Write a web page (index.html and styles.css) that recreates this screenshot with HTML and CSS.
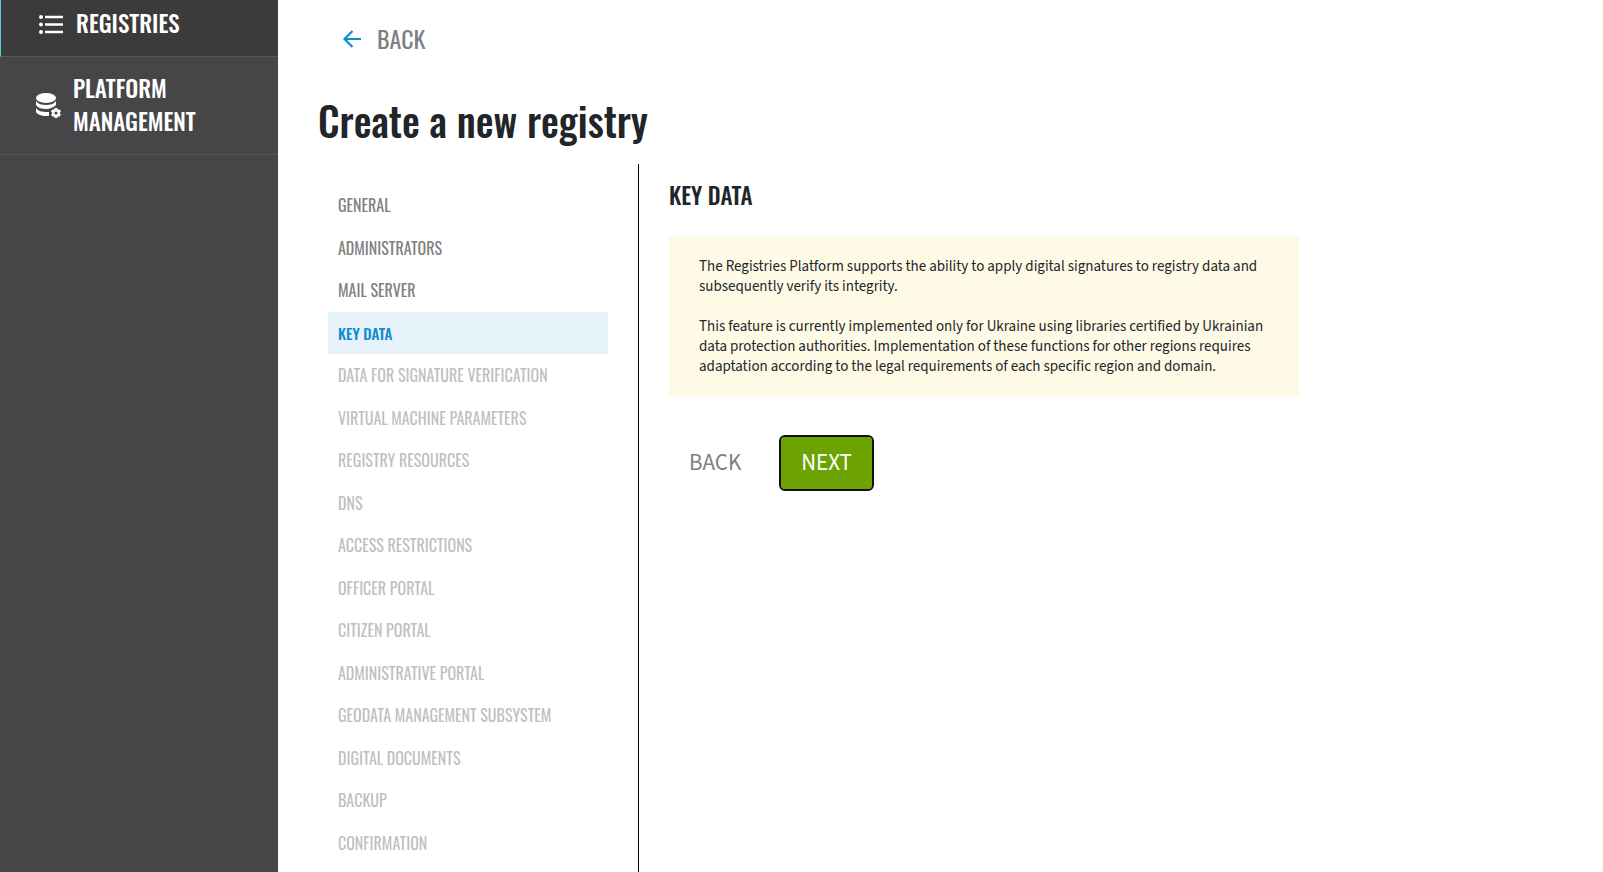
FILE: index.html
```html
<!DOCTYPE html>
<html lang="en">
<head>
<meta charset="utf-8">
<meta name="viewport" content="width=device-width, initial-scale=1">
<title>Create a new registry</title>
<link rel="stylesheet" href="styles.css">
</head>
<body>
<div class="layout">
  <nav class="sidebar" aria-label="Main">
    <a class="nav-item nav-item-active" href="#">
      <svg class="nav-icon" viewBox="0 0 26 26" aria-hidden="true">
        <g fill="#fff"><circle cx="3" cy="6" r="2"/><circle cx="3" cy="13.500" r="2"/><circle cx="3" cy="21" r="2"/></g>
        <path d="M7 6h18M7 13.500h18M7 21h18" stroke="#fff" stroke-width="2.400"/>
      </svg>
      <span class="nav-label">REGISTRIES</span>
    </a>
    <a class="nav-item nav-item-platform" href="#">
      <svg class="nav-icon" viewBox="0 0 26 26" aria-hidden="true">
        <ellipse cx="11" cy="6" rx="10" ry="5" fill="#fff"/>
        <path d="M1 9c2 3 6 4 10 4s8-1 10-4v4c-2 2-6 4-10 4S3 16 1 13z" fill="#fff"/>
        <path d="M1 16c2 3 6 4 10 4h3v4h-3c-5 0-9-2-10-4z" fill="#fff"/>
        <circle cx="21" cy="21" r="6" fill="#464648"/>
        <path d="M21 16v10M16.700 18.500l8.600 5M25.300 18.500l-8.600 5" stroke="#fff" stroke-width="2.800"/>
        <circle cx="21" cy="21" r="2.800" fill="#464648" stroke="#fff" stroke-width="2.400"/>
      </svg>
      <span class="nav-label">PLATFORM MANAGEMENT</span>
    </a>
  </nav>
  <main class="content">
    <a class="back-link" href="#">
      <svg class="back-icon" viewBox="0 0 18 18" aria-hidden="true"><path d="M18 10H1.500M9.500 2L1.500 10l8 8" fill="none" stroke="#0f8bd0" stroke-width="2.200"/></svg>
      <span>BACK</span>
    </a>
    <h1 class="page-title">Create a new registry</h1>
    <div class="wizard">
      <ol class="steps">
        <li><a class="step" href="#">GENERAL</a></li>
        <li><a class="step" href="#">ADMINISTRATORS</a></li>
        <li><a class="step" href="#">MAIL SERVER</a></li>
        <li><a class="step step-current" href="#" aria-current="step">KEY DATA</a></li>
        <li><a class="step step-disabled">DATA FOR SIGNATURE VERIFICATION</a></li>
        <li><a class="step step-disabled">VIRTUAL MACHINE PARAMETERS</a></li>
        <li><a class="step step-disabled">REGISTRY RESOURCES</a></li>
        <li><a class="step step-disabled">DNS</a></li>
        <li><a class="step step-disabled">ACCESS RESTRICTIONS</a></li>
        <li><a class="step step-disabled">OFFICER PORTAL</a></li>
        <li><a class="step step-disabled">CITIZEN PORTAL</a></li>
        <li><a class="step step-disabled">ADMINISTRATIVE PORTAL</a></li>
        <li><a class="step step-disabled">GEODATA MANAGEMENT SUBSYSTEM</a></li>
        <li><a class="step step-disabled">DIGITAL DOCUMENTS</a></li>
        <li><a class="step step-disabled">BACKUP</a></li>
        <li><a class="step step-disabled">CONFIRMATION</a></li>
      </ol>
      <section class="panel">
        <h2 class="panel-title">KEY DATA</h2>
        <div class="notice">
          <p>The Registries Platform supports the ability to apply digital signatures to registry data and subsequently verify its integrity.</p>
          <p>This feature is currently implemented only for Ukraine using libraries certified by Ukrainian data protection authorities. Implementation of these functions for other regions requires adaptation according to the legal requirements of each specific region and domain.</p>
        </div>
        <div class="actions">
          <button class="button" type="button">BACK</button>
          <button class="button button-primary" type="button">NEXT</button>
        </div>
      </section>
    </div>
  </main>
</div>
</body>
</html>
```
FILE: styles.css
```css
:root {
  --display: Oswald, "Roboto Condensed", "Liberation Sans Narrow", "DejaVu Sans Condensed", sans-serif;
  --text: "Source Sans 3", "Noto Sans CJK SC", sans-serif;
}

* {
  box-sizing: border-box;
}

body {
  margin: 0;
  background: #fff;
  color: #212529;
  font-family: var(--text);
}

a {
  color: inherit;
  text-decoration: none;
}

.layout {
  display: flex;
  min-height: 100vh;
}

.sidebar {
  flex: 0 0 278px;
  background: #464648;
  color: #fff;
  font: 500 23px/33px var(--display);
}

.nav-item {
  display: flex;
  align-items: center;
  gap: 12px;
  padding: 15px 35px 16px;
  border-bottom: 1px solid #58585a;
}

.nav-item-active {
  padding: 7px 38px 16px 37px;
  border-left: 1px solid #5fc9d6;
  background: #3b3b3b;
}

.nav-icon {
  flex: none;
  width: 26px;
  height: 26px;
}

.content {
  display: flex;
  flex: 1;
  flex-direction: column;
  padding: 19px 40px 0;
}

.back-link {
  display: flex;
  align-items: center;
  align-self: flex-start;
  gap: 16px;
  padding-left: 25px;
  color: #808080;
  font: 400 24px/38px var(--display);
}

.back-icon {
  width: 18px;
  height: 18px;
  overflow: visible;
}

.page-title {
  margin: 33px 0 14px;
  font: 500 40px/60px var(--display);
}

.wizard {
  display: flex;
  flex: 1;
}

.steps {
  display: grid;
  flex: 0 0 321px;
  margin: 0;
  padding: 20px 30px 8px 10px;
  border-right: 1px solid #000;
  list-style: none;
}

.step {
  display: flex;
  align-items: center;
  height: 100%;
  min-height: 42px;
  padding: 0 10px;
  color: #808080;
  font: 400 16px/22px var(--display);
}

.step-current {
  background: #e5f2fa;
  color: #0f8bd0;
  font-size: 15px;
  font-weight: 500;
}

.step-disabled {
  color: #bfbfbf;
}

.panel {
  flex: 1;
  padding: 13px 0 0 30px;
}

.panel-title {
  margin: 0 0 23px;
  font: 500 23px/36px var(--display);
}

.notice {
  max-width: 630px;
  padding: 21px 30px 19px;
  background: #fffae6;
  color: #212529;
  font-size: 15px;
  line-height: 20px;
}

.notice p {
  margin: 0;
}

.notice p + p {
  margin-top: 20px;
}

.actions {
  display: flex;
  gap: 20px;
  margin-top: 41px;
}

.button {
  padding: 8px 20px;
  border: 0;
  border-radius: 4px;
  background: none;
  color: #808080;
  font: 400 23px/36px var(--text);
}

.button-primary {
  outline: 2px solid #101010;
  background: #6ca300;
  color: #fff;
}
```
